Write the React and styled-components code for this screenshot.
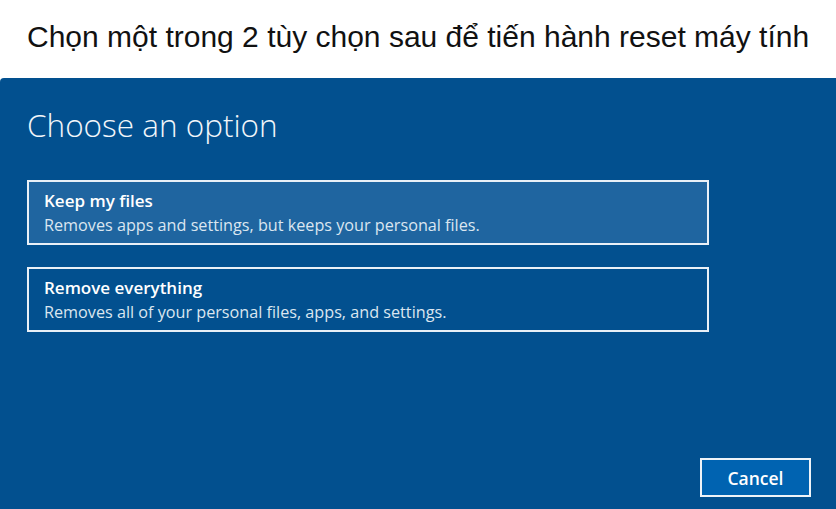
import React from 'react';
import styled, { createGlobalStyle } from 'styled-components';

const GlobalStyle = createGlobalStyle`
  html, body {
    margin: 0;
    padding: 0;
    background: #ffffff;
  }
  body {
    width: 836px;
    height: 509px;
    overflow: hidden;
  }
`;

const Page = styled.div`
  width: 836px;
  height: 509px;
  display: flex;
  flex-direction: column;
`;

const Caption = styled.h1`
  margin: 0;
  height: 78px;
  padding: 0 0 4px 27px;
  box-sizing: border-box;
  display: flex;
  align-items: center;
  font-family: "Liberation Sans", Arial, sans-serif;
  font-weight: 400;
  font-size: 30px;
  color: #111;
`;

const Panel = styled.div`
  flex: 1;
  background: #02508f;
  border-top-left-radius: 4px;
  padding: 27px 0 0 27px;
  display: flex;
  flex-direction: column;
  font-family: "Open Sans", "Noto Sans", sans-serif;
  color: #fff;
`;

const Heading = styled.h2`
  margin: 0;
  font-weight: 300;
  font-size: 31.5px;
  line-height: 40px;
  color: #f2f6fa;
`;

const Options = styled.div`
  margin-top: 35px;
  display: flex;
  flex-direction: column;
  gap: 22px;
  width: 682px;
`;

const Option = styled.div`
  box-sizing: border-box;
  height: 65px;
  border: 2px solid #e9f0f7;
  background: ${({ $active }) => ($active ? '#1f65a0' : 'transparent')};
  padding: 6px 0 0 15px;
  display: flex;
  flex-direction: column;
`;

const OptionTitle = styled.div`
  font-weight: 600;
  font-size: 17px;
  line-height: 26px;
  color: #ffffff;
`;

const OptionText = styled.div`
  font-weight: 400;
  font-size: 16.2px;
  line-height: 22px;
  color: #dbe6f0;
`;

const Footer = styled.div`
  margin-top: auto;
  padding: 0 25px 12px 0;
  display: flex;
  justify-content: flex-end;
`;

const CancelButton = styled.button`
  box-sizing: border-box;
  width: 111px;
  height: 39px;
  border: 2px solid #eef3f8;
  background: #0063b1;
  color: #fff;
  font-family: "Open Sans", "Noto Sans", sans-serif;
  font-weight: 600;
  font-size: 17.5px;
  cursor: pointer;
`;

const options = [
  {
    title: 'Keep my files',
    text: 'Removes apps and settings, but keeps your personal files.',
    active: true,
  },
  {
    title: 'Remove everything',
    text: 'Removes all of your personal files, apps, and settings.',
    active: false,
  },
];

export default function App() {
  return (
    <Page>
      <GlobalStyle />
      <Caption>Chọn một trong 2 tùy chọn sau để tiến hành reset máy tính</Caption>
      <Panel>
        <Heading>Choose an option</Heading>
        <Options>
          {options.map((o) => (
            <Option key={o.title} $active={o.active}>
              <OptionTitle>{o.title}</OptionTitle>
              <OptionText>{o.text}</OptionText>
            </Option>
          ))}
        </Options>
        <Footer>
          <CancelButton>Cancel</CancelButton>
        </Footer>
      </Panel>
    </Page>
  );
}
